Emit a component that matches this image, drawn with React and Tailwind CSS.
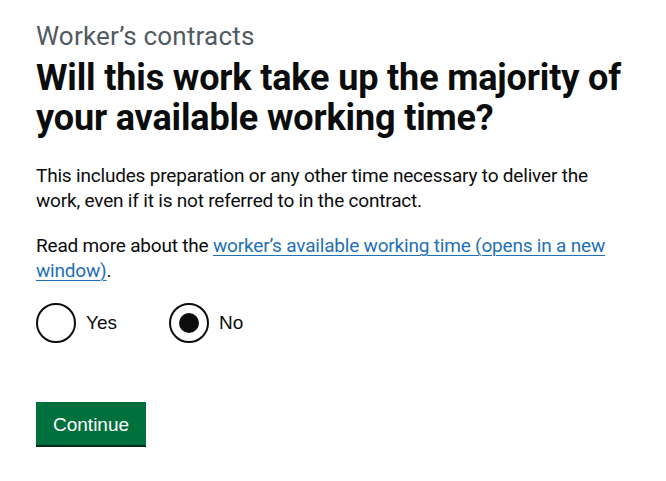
import React, { useState } from 'react';

const App = () => {
  const [answer, setAnswer] = useState('no');

  return (
    <div className="min-h-screen bg-white text-[#0b0c0c] px-9 pt-5 font-['Roboto',sans-serif]">
      <span className="block text-[26px] leading-[32px] tracking-[0.2px] text-[#505a5f] mb-[6px]">Worker’s contracts</span>
      <h1 className="text-[36px] leading-[40px] font-bold tracking-[-0.15px] mb-[25px]">
        Will this work take up the majority of your available working time?
      </h1>
      <div className="max-w-[612px] text-[19px] leading-[25px] tracking-[-0.19px]">
        <p className="mb-5">
          This includes preparation or any other time necessary to deliver the work, even if it is not referred to in the contract.
        </p>
        <p className="mb-5">
          Read more about the{' '}
          <a href="#" className="text-[#1d70b8] underline decoration-1 underline-offset-[3px]">
            worker’s available working time (opens in a new window)
          </a>
          .
        </p>
      </div>

      <div className="flex gap-5 mb-[59px] font-['Liberation_Sans',Arial,sans-serif]">
        {[
          { id: 'yes', label: 'Yes' },
          { id: 'no', label: 'No' },
        ].map((opt) => (
          <label key={opt.id} className="flex items-center cursor-pointer w-[113px]">
            <span className="w-10 h-10 rounded-full border-2 border-[#0b0c0c] flex items-center justify-center shrink-0">
              {answer === opt.id && <span className="w-5 h-5 rounded-full bg-[#0b0c0c]" />}
            </span>
            <input
              type="radio"
              name="answer"
              className="sr-only"
              checked={answer === opt.id}
              onChange={() => setAnswer(opt.id)}
            />
            <span className="pl-[10px] text-[19px]">{opt.label}</span>
          </label>
        ))}
      </div>

      <button className="bg-[#00703c] text-white text-[19px] leading-none px-[17px] pt-[13px] pb-[11px] shadow-[0_2px_0_#002d18] font-['Liberation_Sans',Arial,sans-serif]">
        Continue
      </button>
    </div>
  );
};

export default App;
